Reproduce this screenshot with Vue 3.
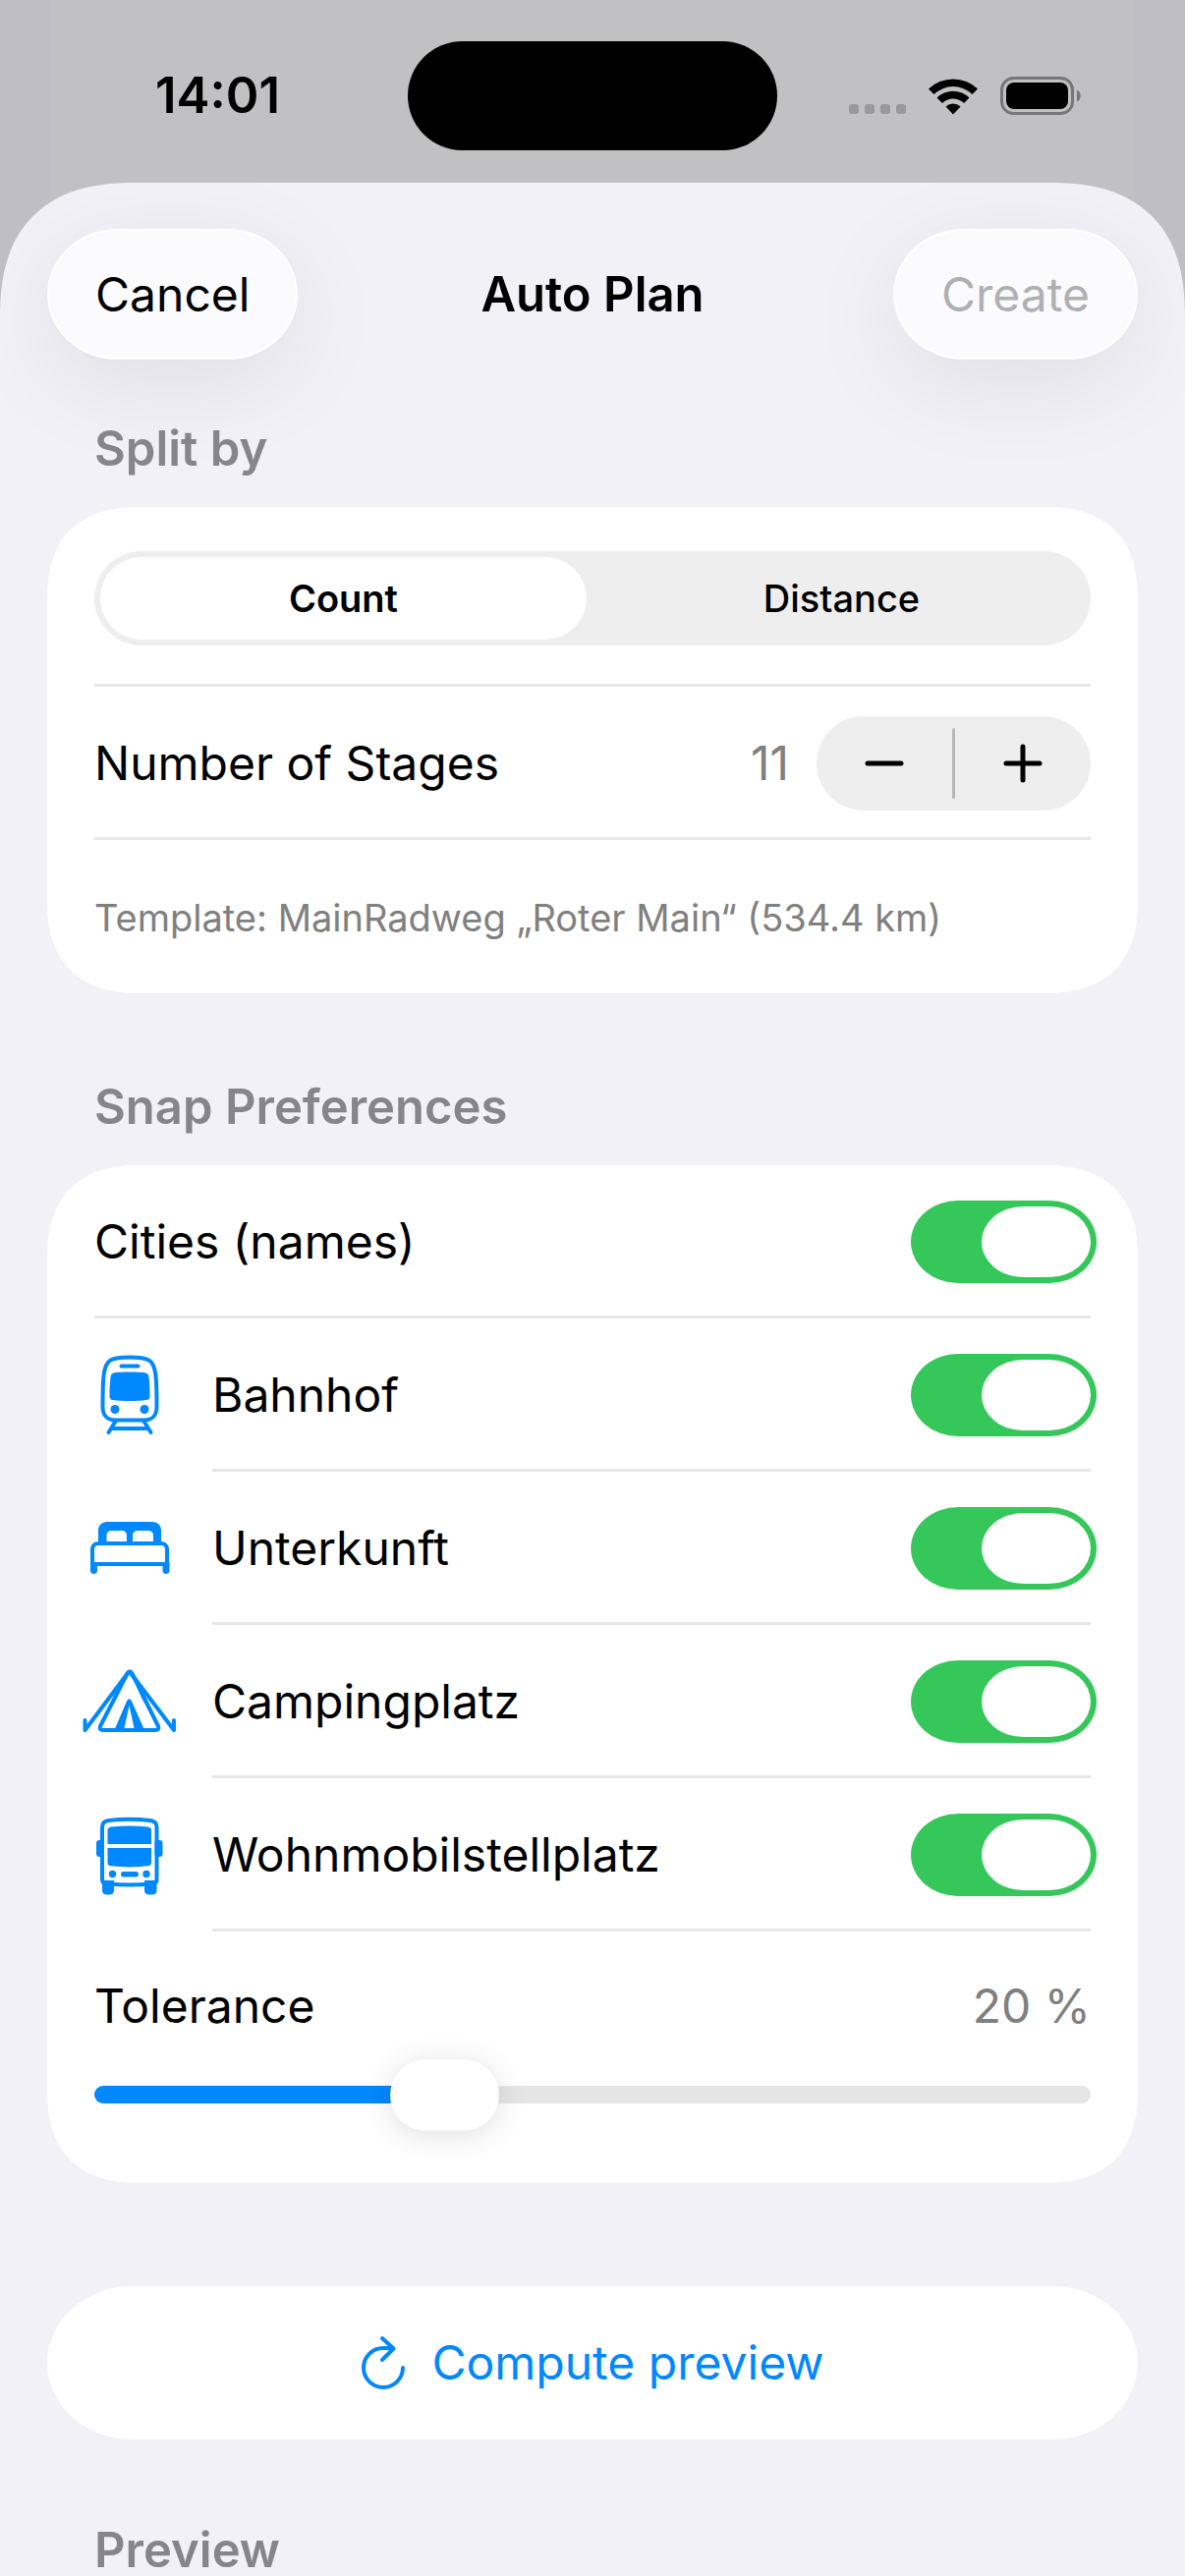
<script setup>
import { computed, ref } from 'vue'

const MIN_TOLERANCE = 5
const MAX_TOLERANCE = 50

const splitBy = ref('count')
const stages = ref(11)
const tolerance = ref(20)

const snapCities = ref(true)
const places = ref([
  { id: 'station', label: 'Bahnhof', enabled: true },
  { id: 'lodging', label: 'Unterkunft', enabled: true },
  { id: 'camping', label: 'Campingplatz', enabled: true },
  { id: 'camper', label: 'Wohnmobilstellplatz', enabled: true },
])

const sliderFill = computed(() => {
  const share = (tolerance.value - MIN_TOLERANCE) / (MAX_TOLERANCE - MIN_TOLERANCE)
  return `${Math.round(share * 100)}%`
})

function changeStages(step) {
  stages.value = Math.max(stages.value + step, 1)
}
</script>

<template>
  <div class="screen">
    <div class="status-bar">
      <span class="time">14:01</span>
      <div class="island"></div>
      <div class="status-icons">
        <svg class="signal" viewBox="0 0 58 10" aria-hidden="true">
          <rect v-for="n in 4" :key="n" :x="(n - 1) * 16" width="10" height="10" rx="3" />
        </svg>
        <svg class="wifi" viewBox="0 0 52 38" aria-hidden="true">
          <path d="M1 11.500A36 36 0 0 1 51 11.500L45.500 17A28 28 0 0 0 6.500 17Z" />
          <path d="M9.500 20.500A23.500 23.500 0 0 1 42.500 20.500L37 26A15.500 15.500 0 0 0 15 26Z" />
          <path d="M18.500 29.500A11 11 0 0 1 33.500 29.500L26 37.500Z" />
        </svg>
        <svg class="battery" viewBox="0 0 82 40" aria-hidden="true">
          <rect
            x="1.500"
            y="1.500"
            width="72"
            height="36"
            rx="12"
            fill="none"
            stroke="#77777a"
            stroke-width="3"
          />
          <rect x="6" y="6" width="63" height="27" rx="8" />
          <path d="M78 13.500C83 15.500 83 23.500 78 25.500Z" fill="#77777a" />
        </svg>
      </div>
    </div>

    <main class="sheet">
      <header class="nav">
        <button class="nav-button" type="button">Cancel</button>
        <h1>Auto Plan</h1>
        <button class="nav-button" type="button" disabled>Create</button>
      </header>

      <section>
        <h2>Split by</h2>
        <div class="card">
          <div class="segment-row">
            <div class="segments" role="radiogroup" aria-label="Split by">
              <label class="segment" :class="{ active: splitBy === 'count' }">
                <input v-model="splitBy" type="radio" name="split" value="count" />
                Count
              </label>
              <label class="segment" :class="{ active: splitBy === 'distance' }">
                <input v-model="splitBy" type="radio" name="split" value="distance" />
                Distance
              </label>
            </div>
          </div>

          <div class="stage-row">
            <span id="stages-label">Number of Stages</span>
            <div class="stage-controls">
              <output class="value">{{ stages }}</output>
              <div class="stepper" role="group" aria-labelledby="stages-label">
                <button type="button" aria-label="Decrease" @click="changeStages(-1)">
                  <svg viewBox="0 0 40 44"><path d="M3 22H37" /></svg>
                </button>
                <span class="stepper-line"></span>
                <button type="button" aria-label="Increase" @click="changeStages(1)">
                  <svg viewBox="0 0 40 44"><path d="M3 22H37M20 5V39" /></svg>
                </button>
              </div>
            </div>
          </div>

          <p class="template">Template: MainRadweg „Roter Main“ (534.4 km)</p>
        </div>
      </section>

      <section class="spaced">
        <h2>Snap Preferences</h2>
        <div class="card">
          <label class="row plain">
            <span class="row-body">
              Cities (names)
              <input v-model="snapCities" class="toggle" type="checkbox" role="switch" />
            </span>
          </label>

          <label v-for="place in places" :key="place.id" class="row">
            <svg v-if="place.id === 'station'" class="icon" viewBox="0 0 96 84" aria-hidden="true">
              <path
                class="line"
                d="M48 3.500C38 3.500 32 4.500 28.500 6.500C24 9 22.500 14 21.500 22C20.700 30 20.500 42 20.500 54C20.500 62 25 67.500 33 67.500H63C71 67.500 75.500 62 75.500 54C75.500 42 75.300 30 74.500 22C73.500 14 72 9 67.500 6.500C64 4.500 58 3.500 48 3.500Z"
              />
              <path class="line" d="M39.500 12.500H56.500" />
              <path
                d="M48 18.500C40 18.500 34 18.800 31.500 19.500C29.500 20 28.800 21.500 28.500 24C27.600 31 27.500 37 27.500 43C27.500 45.500 28.500 46.800 31 47C36 47.700 42 48 48 48C54 48 60 47.700 65 47C67.500 46.800 68.500 45.500 68.500 43C68.500 37 68.400 31 67.500 24C67.200 21.500 66.500 20 64.500 19.500C62 18.800 56 18.500 48 18.500Z"
              />
              <circle cx="33" cy="56.500" r="4.500" />
              <circle cx="63" cy="56.500" r="4.500" />
              <path class="line" d="M34 68L26.500 80M62 68L69.500 80M31 76H65" />
            </svg>
            <svg
              v-else-if="place.id === 'lodging'"
              class="icon"
              viewBox="0 0 96 84"
              aria-hidden="true"
            >
              <path
                fill-rule="evenodd"
                d="M16 37V24C16 18.500 19.500 15 25 15H71C76.500 15 80 18.500 80 24V37ZM24.500 35H45V29C45 26 43 24 40 24H30C26.500 24 24.500 26 24.500 29ZM51 35H72V29C72 26 70 24 66.500 24H56.500C53 24 51 26 51 29Z"
              />
              <path class="line" d="M10 58V43C10 39.500 12.500 37 16 37H80C83.500 37 86 39.500 86 43V58Z" />
              <path
                d="M8 56H15V65C15 69 8 69 8 65ZM81.500 56H88.500V65C88.500 69 81.500 69 81.500 65Z"
              />
            </svg>
            <svg
              v-else-if="place.id === 'camping'"
              class="icon"
              viewBox="0 0 96 84"
              aria-hidden="true"
            >
              <path
                class="line"
                d="M45.500 13.500Q48 9 50.500 13.500L77 67Q78.500 71 74 71H21Q16.500 71 18 67Z"
              />
              <path class="line" d="M46 13L2.500 71V61M49 13L93 71V61" />
              <path d="M44 15L33 36L20 63L35 38ZM51 15L62 36L75 63L60 38Z" />
              <path
                fill-rule="evenodd"
                d="M32 72L45 41.500Q47.500 37 50 41.500L63.500 72ZM42.500 69H52.500L47.500 46Z"
              />
            </svg>
            <svg v-else class="icon" viewBox="0 0 96 84" aria-hidden="true">
              <path
                class="line"
                d="M20 67V14C20 9.500 22 7.500 26.500 7C41 5.200 54 5.200 69 7C73.500 7.500 75.500 9.500 75.500 14V67C75.500 70 74 71 71 71.300C55 73 41 73 24.500 71.300C21.500 71 20 70 20 67Z"
              />
              <path d="M25.500 31V17C25.500 15 26.500 14 29 13.500C42 12 54 12 66.500 13.500C69 14 70 15 70 17V31Z" />
              <path d="M25.500 35H70V50C70 52 69 53 66.500 53.300C54 54.800 42 54.800 29 53.300C26.500 53 25.500 52 25.500 50Z" />
              <circle cx="30.500" cy="61.500" r="3.700" />
              <circle cx="65" cy="61.500" r="3.700" />
              <rect x="39" y="59" width="18" height="5.500" rx="2.700" />
              <rect x="14" y="27" width="8" height="17" rx="3" />
              <rect x="73.500" y="27" width="8" height="17" rx="3" />
              <path
                d="M20 68H32V78C32 81 30 82.500 27 82.500H25C22 82.500 20 81 20 78ZM63 68H75.500V78C75.500 81 73.500 82.500 70.500 82.500H68C65 82.500 63 81 63 78Z"
              />
            </svg>
            <span class="row-body">
              {{ place.label }}
              <input v-model="place.enabled" class="toggle" type="checkbox" role="switch" />
            </span>
          </label>

          <div class="tolerance">
            <div class="tolerance-head">
              <label for="tolerance">Tolerance</label>
              <output class="value" for="tolerance">{{ tolerance }} %</output>
            </div>
            <input
              id="tolerance"
              v-model.number="tolerance"
              class="slider"
              type="range"
              :min="MIN_TOLERANCE"
              :max="MAX_TOLERANCE"
              :style="{ '--fill': sliderFill }"
            />
          </div>
        </div>
      </section>

      <button class="compute" type="button">
        <svg viewBox="0 0 46 58" aria-hidden="true">
          <path d="M43 34A20 20 0 1 1 23 14H33M22 4L33.500 14.500L22 26" />
        </svg>
        Compute preview
      </button>

      <section>
        <h2>Preview</h2>
      </section>
    </main>
  </div>
</template>

<style>
body {
  margin: 0;
}
</style>

<style scoped>
.screen {
  height: 100vh;
  display: flex;
  flex-direction: column;
  overflow: hidden;
  background: linear-gradient(
    to right,
    #bfbec4 51px,
    #c1c1c3 52px,
    #c1c1c3 calc(100% - 52px),
    #bfbec4 calc(100% - 51px)
  );
  color: #000;
  font-family: Inter, 'Liberation Sans', sans-serif;
  font-size: 48px;
  line-height: 60px;
}

button {
  border: none;
  padding: 0;
  font: inherit;
  color: inherit;
  cursor: pointer;
}

.status-bar {
  flex: none;
  display: grid;
  grid-template-columns: 1fr 376px 1fr;
  align-items: center;
  height: 186px;
}

.time {
  justify-self: center;
  padding: 8px 0 0 28px;
  font-size: 51px;
  font-weight: 600;
}

.island {
  height: 111px;
  margin-top: 8px;
  border-radius: 56px;
  background: #000;
}

.status-icons {
  justify-self: end;
  display: flex;
  align-items: center;
  gap: 22px;
  padding-right: 106px;
  padding-top: 9px;
}

.signal {
  width: 58px;
  height: 10px;
  margin-top: 26px;
  fill: #99999b;
}

.wifi {
  width: 52px;
  height: 38px;
}

.battery {
  width: 82px;
  height: 40px;
}

.sheet {
  flex: 1;
  min-height: 0;
  padding: 47px 48px 0;
  overflow: hidden;
  border-radius: 138px 138px 0 0;
  corner-shape: superellipse(1.3);
  background: #f2f1f7;
}

.nav {
  display: grid;
  grid-template-columns: 1fr auto 1fr;
  align-items: center;
  margin-bottom: 56px;
}

h1 {
  margin: 0;
  font-size: 49px;
  font-weight: 600;
}

.nav-button {
  justify-self: start;
  height: 133px;
  padding: 0 47px;
  border: 2px solid #fff;
  border-radius: 72px / 67px;
  background: #fbfbfe;
  box-shadow: 0 24px 100px rgba(0, 0, 0, 0.08);
}

.nav-button:last-child {
  justify-self: end;
}

.nav-button:disabled {
  color: #b0b0b2;
  cursor: default;
}

h2 {
  margin: 0;
  padding: 11px 48px 35px;
  font-size: 49px;
  line-height: 48px;
  font-weight: 600;
  color: #85858b;
}

.card {
  border-radius: 96px;
  corner-shape: superellipse(1.3);
  background: #fff;
}

.spaced {
  padding-top: 81px;
}

.segment-row {
  margin: 0 48px;
  padding: 45px 0 39px;
  border-bottom: 3px solid #e6e6e6;
}

.segments {
  display: grid;
  grid-template-columns: 1fr 1fr;
  gap: 12px;
  padding: 6px;
  border-radius: 48px;
  background: #eee;
  font-size: 38px;
  font-weight: 500;
}

.segment {
  position: relative;
  height: 84px;
  line-height: 84px;
  border-radius: 42px;
  text-align: center;
  cursor: pointer;
}

.segment.active {
  background: #fff;
  font-weight: 600;
}

.segment input {
  position: absolute;
  inset: 0;
  margin: 0;
  opacity: 0;
}

.stage-row {
  display: flex;
  justify-content: space-between;
  align-items: center;
  height: 150px;
  margin: 0 48px;
  padding-top: 3px;
  border-bottom: 3px solid #e6e6e6;
}

.stage-controls {
  display: flex;
  align-items: center;
  gap: 28px;
}

.value {
  color: #808080;
}

.stepper {
  display: flex;
  align-items: center;
  border-radius: 48px;
  background: #eee;
}

.stepper button {
  width: 138px;
  height: 96px;
  display: flex;
  align-items: center;
  justify-content: center;
  background: none;
}

.stepper svg {
  width: 40px;
  height: 44px;
  fill: none;
  stroke: #000;
  stroke-width: 5;
  stroke-linecap: round;
}

.stepper-line {
  width: 3px;
  height: 72px;
  border-radius: 2px;
  background: #b8b8b8;
}

.template {
  margin: 0;
  padding: 49px 48px 47px;
  font-size: 38px;
  color: #808080;
}

.row {
  display: flex;
  align-items: center;
  gap: 36px;
  padding: 0 48px 0 36px;
  cursor: pointer;
}

.row.plain {
  padding-left: 48px;
}

.row-body {
  flex: 1;
  display: flex;
  justify-content: space-between;
  align-items: center;
  height: 150px;
  padding-top: 3px;
  border-bottom: 3px solid #e6e6e6;
}

.icon {
  flex: none;
  width: 96px;
  height: 84px;
  fill: #08f;
}

.icon .line {
  fill: none;
  stroke: #08f;
  stroke-width: 4;
  stroke-linecap: round;
  stroke-linejoin: round;
}

.toggle {
  appearance: none;
  flex: none;
  width: 189px;
  height: 84px;
  margin: 0 -6px 0 0;
  padding: 6px;
  border-radius: 48px / 42px;
  background: #e4e4e6;
  cursor: pointer;
}

.toggle::before {
  content: '';
  display: block;
  width: 111px;
  height: 72px;
  border-radius: 42px / 36px;
  background: #fff;
}

.toggle:checked {
  background: #35c759;
}

.toggle:checked::before {
  margin-left: auto;
}

.tolerance {
  padding: 46px 48px 54px;
}

.tolerance-head {
  display: flex;
  justify-content: space-between;
}

.slider {
  appearance: none;
  display: block;
  width: 100%;
  height: 73px;
  margin: 23px 0 0;
  background: none;
}

.slider::-webkit-slider-runnable-track {
  height: 18px;
  border-radius: 9px;
  background: linear-gradient(to right, #08f var(--fill), #e5e5e5 var(--fill));
}

.slider::-webkit-slider-thumb {
  appearance: none;
  width: 111px;
  height: 73px;
  margin-top: -27px;
  border-radius: 37px;
  background: #fff;
  box-shadow: 0 4px 30px rgba(0, 0, 0, 0.13);
}

.compute {
  width: 100%;
  height: 156px;
  margin: 105px 0 78px;
  display: flex;
  align-items: center;
  justify-content: center;
  gap: 26px;
  border-radius: 86px / 78px;
  background: #fff;
  color: #08f;
}

.compute svg {
  width: 46px;
  height: 58px;
  fill: none;
  stroke: #08f;
  stroke-width: 4;
  stroke-linecap: round;
  stroke-linejoin: round;
}
</style>
